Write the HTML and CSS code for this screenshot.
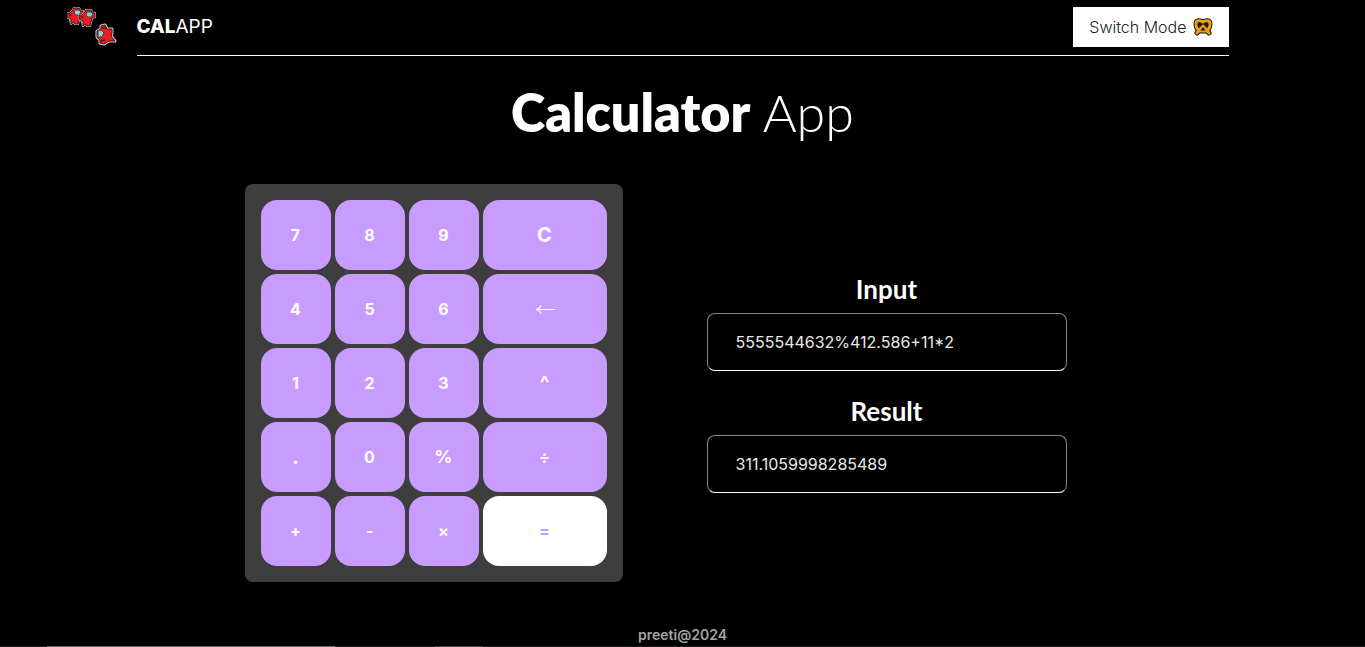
FILE: index.html
```html
<!DOCTYPE html>
<html lang="en">
<head>
<meta charset="utf-8">
<meta name="viewport" content="width=device-width, initial-scale=1">
<title>Calculator App</title>
<link rel="stylesheet" href="styles.css">
</head>
<body>
<header class="header">
  <div class="logo">
    <svg width="50" height="40" viewBox="0 0 50 40" aria-hidden="true">
      <defs>
        <g id="crew" stroke-linejoin="round">
          <path d="M4 4 6 1l5 0 2 3 2 0 0 4-3 1-1 4-1 4-3 0-1-2-3 2-1-5-3-2V6l3 0z" fill="#c8c8c8" stroke="#c8c8c8" stroke-width="2"/>
          <path d="M4 4 6 1l5 0 2 3 2 0 0 4-3 1-1 4-1 4-3 0-1-2-3 2 0-5-4-2V6l3 0z" fill="#ee1d24" stroke="#46151a" stroke-width="1"/>
          <path d="M7 3h4l2 2-2 3H8L6 6z" fill="#8bd0d8" stroke="#39474b" stroke-width="1"/>
          <path d="M1 7l2 2" stroke="#6b151c" stroke-width="2"/>
        </g>
      </defs>
      <use href="#crew" x="1" y="1"/>
      <use href="#crew" x="13" y="3"/>
      <g stroke-linejoin="round">
        <path d="M34 20l4-1 2 4 5 0 0 4-1 3 4 5-6 0-5 3-4-1v-3l-3-3 0-6 4-2z" fill="#ccc" stroke="#c8c8c8" stroke-width="3"/>
        <path d="M34 20l4-1 2 4 5 0 0 4-1 3 4 5-6 0-5 3-4-1v-3l-3-3 0-6 4-2z" fill="#ee1d24" stroke="#4b151a" stroke-width="1"/>
        <path d="M31 25l3-1 3 3-2 4-4 0z" fill="#8bd0d8" stroke="#39474b" stroke-width="1"/>
        <path d="M33 35l5-1M35 22l4 0" stroke="#6b151c" stroke-width="2"/>
      </g>
    </svg>
  </div>
  <nav class="nav">
    <div class="brand"><strong>CAL</strong>APP</div>
    <button class="mode" type="button">Switch Mode
      <svg width="20" height="18" viewBox="0 0 20 18" aria-hidden="true">
        <g fill="none" stroke-linecap="round" stroke-linejoin="round">
          <g stroke="#171a20" stroke-width="5">
            <path d="M10 4C7 2 3 2 3 6c0 4 2 6 4 7h6c2-1 4-3 4-7 0-4-4-4-7-2z"/>
            <path d="M4 15 12 6M16 15 8 6"/>
          </g>
          <g stroke="#f0a20c" stroke-width="3">
            <path d="M10 4C7 2 3 2 3 6c0 4 2 6 4 7h6c2-1 4-3 4-7 0-4-4-4-7-2z"/>
            <path d="M4 15 10 8 16 15"/>
          </g>
        </g>
        <g fill="#171a20">
          <ellipse cx="6.500" cy="6.500" rx="2" ry="2"/>
          <ellipse cx="13.500" cy="6.500" rx="2" ry="2"/>
          <path d="M10 9l2.500 3.500h-5z"/>
        </g>
      </svg>
    </button>
  </nav>
</header>
<h1 class="title"><strong>Calculator</strong> App</h1>
<main class="calculator">
  <div class="keypad">
    <button class="key" type="button">7</button>
    <button class="key" type="button">8</button>
    <button class="key" type="button">9</button>
    <button class="key key-large" type="button">C</button>
    <button class="key" type="button">4</button>
    <button class="key" type="button">5</button>
    <button class="key" type="button">6</button>
    <button class="key" type="button" aria-label="Backspace"><svg width="20" height="10" viewBox="0 0 20 10" fill="none" stroke="#fff" stroke-width="1.200" aria-hidden="true"><path d="M1 5.500h19M6 1.500C5 4 3 5 1 5.500 3 6 5 7 6 9.500"/></svg></button>
    <button class="key" type="button">1</button>
    <button class="key" type="button">2</button>
    <button class="key" type="button">3</button>
    <button class="key key-large" type="button">^</button>
    <button class="key key-large" type="button">.</button>
    <button class="key" type="button">0</button>
    <button class="key key-percent" type="button">%</button>
    <button class="key" type="button">÷</button>
    <button class="key" type="button">+</button>
    <button class="key" type="button">-</button>
    <button class="key" type="button">×</button>
    <button class="key key-equals" type="button">=</button>
  </div>
  <div class="fields">
    <div class="field">
      <label class="label" for="expression">Input</label>
      <input class="display" id="expression" type="text" value="5555544632%412.586+11*2">
    </div>
    <div class="field">
      <label class="label" for="result">Result</label>
      <input class="display" id="result" type="text" value="311.1059998285489" readonly>
    </div>
  </div>
</main>
<footer class="footer">preeti@2024</footer>
<div class="strip"></div>
</body>
</html>
```
FILE: styles.css
```css
* { box-sizing: border-box; }

body {
  margin: 0;
  min-height: 100vh;
  display: flex;
  flex-direction: column;
  background: #000;
  color: #fff;
  font-family: Inter, "Liberation Sans", sans-serif;
}

.header { display: flex; padding-right: 10vw; }

.logo {
  flex: 0 0 10vw;
  display: flex;
  justify-content: flex-end;
  align-items: flex-start;
  padding: 6px 20px 0 0;
}

.nav {
  flex: 1;
  display: flex;
  justify-content: space-between;
  align-items: center;
  padding: 7px 0 8px;
  border-bottom: 1px solid #fff;
}

.brand { font-size: 19px; line-height: 40px; }
.brand strong { font-weight: 800; }

.mode {
  display: flex;
  align-items: center;
  gap: 6px;
  height: 40px;
  padding: 0 16px;
  border: 0;
  background: #fff;
  color: #222;
  font: 300 16px/24px Inter, sans-serif;
}

.title {
  margin: 28px 0 44px;
  text-align: center;
  font: 300 52px/56px Lato, sans-serif;
}
.title strong { font-weight: 800; }

.calculator {
  display: flex;
  justify-content: center;
  align-items: center;
  gap: 84px;
  padding-right: 54px;
}

.keypad {
  display: grid;
  grid-template-columns: repeat(3, 70px) 124px;
  grid-auto-rows: 70px;
  gap: 4px;
  padding: 16px;
  border-radius: 8px;
  background: #3e3e3e;
}

.key {
  display: flex;
  justify-content: center;
  align-items: center;
  padding: 0;
  border: 0;
  border-radius: 16px;
  background: #c89bff;
  color: #fff;
  font: 700 16px/24px Inter, sans-serif;
}
.key-large { font-size: 20px; }
.key-percent { font-size: 18px; }
.key-equals { background: #fff; color: #c89bff; }

.fields {
  display: flex;
  flex-direction: column;
  gap: 24px;
  width: 360px;
}

.field { display: flex; flex-direction: column; gap: 8px; }

.label {
  text-align: center;
  font: 700 26px/32px Lato, sans-serif;
}

.display {
  width: 100%;
  height: 58px;
  padding: 0 28px;
  border: 1px solid #858585;
  border-bottom-color: #fff;
  border-radius: 8px;
  background: #000;
  color: #e8e8e8;
  font: 400 16px/24px Inter, sans-serif;
}

.footer {
  margin-top: auto;
  padding-bottom: 1px;
  text-align: center;
  color: #a3a3a3;
  font-size: 14px;
  font-weight: 600;
  line-height: 20px;
}

.strip {
  height: 1px;
  background: linear-gradient(90deg, #211a1c 47px, #666 47px 335px, #211a1c 335px 435px, #444 435px 483px, #211a1c 483px);
}
```
